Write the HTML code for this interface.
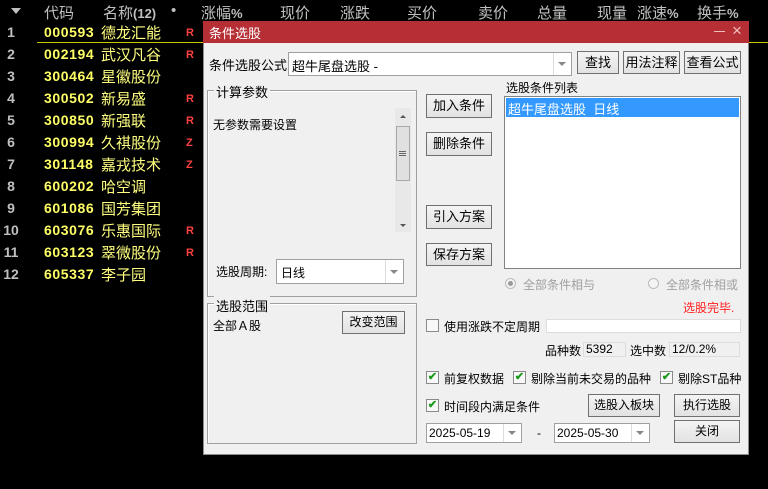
<!DOCTYPE html>
<html><head><meta charset="utf-8"><style>
*{margin:0;padding:0;box-sizing:border-box}
body{width:768px;height:489px;background:#000;position:relative;overflow:hidden;font-family:"Liberation Sans","Noto Sans CJK SC",sans-serif}
.a{position:absolute;white-space:nowrap}
.h{color:#c0c0c0;font-size:15px;top:2px}
.n{color:#c0c0c0;font-size:14px;font-weight:bold;left:0;width:22px;text-align:center}
.c{color:#ffff66;font-size:14px;font-weight:bold;left:44px;letter-spacing:0.6px}
.nm{color:#ffff80;font-size:15px;left:101px}
.r{color:#ff4040;font-size:11px;font-weight:bold;left:186px}
.d{font-size:12px;color:#000}
.btn{position:absolute;border:1px solid #707070;background:linear-gradient(#f4f4f4,#e2e2e2);font-size:12px;text-align:center;color:#000}
.box{position:absolute;background:#fff;border:1px solid #a0a0a0}
.grp{position:absolute;border:1px solid #a0a0a0;box-shadow:inset 1px 1px 0 #fff}
.gt{position:absolute;background:#f0f0f0;font-size:12px;padding:0 2px}
.cb{position:absolute;width:13px;height:13px;border:1px solid #8a8a8a;background:#f8f8f8;font-size:11px;line-height:11px;color:#1a9a1a;text-align:center;font-weight:bold}
.arr{position:absolute;width:0;height:0;border-left:4px solid transparent;border-right:4px solid transparent;border-top:4px solid #888}
</style></head><body>
<div class="a" style="left:11px;top:8px;width:0;height:0;border-left:5px solid transparent;border-right:5px solid transparent;border-top:6px solid #c0c0c0"></div>
<div class="a h" style="left:44px">代码</div>
<div class="a h" style="left:103px">名称<b style="font-size:13px">(12)</b></div>
<div class="a h" style="left:171px">•</div>
<div class="a h" style="left:201px">涨幅<b style="font-size:13px">%</b></div>
<div class="a h" style="left:280px">现价</div>
<div class="a h" style="left:340px">涨跌</div>
<div class="a h" style="left:407px">买价</div>
<div class="a h" style="left:478px">卖价</div>
<div class="a h" style="left:537px">总量</div>
<div class="a h" style="left:597px">现量</div>
<div class="a h" style="left:637px">涨速<b style="font-size:13px">%</b></div>
<div class="a h" style="left:697px">换手<b style="font-size:13px">%</b></div>
<div class="a" style="left:37px;top:42px;width:731px;height:1px;background:#c8c800"></div>

<div class="a n" style="top:24px">1</div><div class="a c" style="top:24px">000593</div><div class="a nm" style="top:22px">德龙汇能</div><div class="a r" style="top:27px">R</div>
<div class="a n" style="top:46px">2</div><div class="a c" style="top:46px">002194</div><div class="a nm" style="top:44px">武汉凡谷</div><div class="a r" style="top:49px">R</div>
<div class="a n" style="top:68px">3</div><div class="a c" style="top:68px">300464</div><div class="a nm" style="top:66px">星徽股份</div>
<div class="a n" style="top:90px">4</div><div class="a c" style="top:90px">300502</div><div class="a nm" style="top:88px">新易盛</div><div class="a r" style="top:93px">R</div>
<div class="a n" style="top:112px">5</div><div class="a c" style="top:112px">300850</div><div class="a nm" style="top:110px">新强联</div><div class="a r" style="top:115px">R</div>
<div class="a n" style="top:134px">6</div><div class="a c" style="top:134px">300994</div><div class="a nm" style="top:132px">久祺股份</div><div class="a r" style="top:137px">Z</div>
<div class="a n" style="top:156px">7</div><div class="a c" style="top:156px">301148</div><div class="a nm" style="top:154px">嘉戎技术</div><div class="a r" style="top:159px">Z</div>
<div class="a n" style="top:178px">8</div><div class="a c" style="top:178px">600202</div><div class="a nm" style="top:176px">哈空调</div>
<div class="a n" style="top:200px">9</div><div class="a c" style="top:200px">601086</div><div class="a nm" style="top:198px">国芳集团</div>
<div class="a n" style="top:222px">10</div><div class="a c" style="top:222px">603076</div><div class="a nm" style="top:220px">乐惠国际</div><div class="a r" style="top:225px">R</div>
<div class="a n" style="top:244px">11</div><div class="a c" style="top:244px">603123</div><div class="a nm" style="top:242px">翠微股份</div><div class="a r" style="top:247px">R</div>
<div class="a n" style="top:266px">12</div><div class="a c" style="top:266px">605337</div><div class="a nm" style="top:264px">李子园</div>

<!-- dialog -->
<div class="a" style="left:203px;top:21px;width:546px;height:434px;background:#f0f0f0;border:1px solid #8c8c8c"></div>
<div class="a" style="left:203px;top:21px;width:546px;height:22px;background:#b52f35"></div>
<div class="a" style="left:209px;top:23px;color:#fff;font-size:13px">条件选股</div>
<div class="a" style="left:714px;top:31px;width:11px;height:1px;background:#f0c0c0"></div>
<div class="a" style="left:732px;top:21px;color:#f0c0c0;font-size:17px">×</div>

<div class="a d" style="left:209px;top:55px;font-size:13px">条件选股公式</div>
<div class="box" style="left:288px;top:52px;width:284px;height:24px"></div>
<div class="a d" style="left:292px;top:56px;font-size:13px">超牛尾盘选股 -</div>
<div class="a" style="left:553px;top:53px;width:1px;height:22px;background:#ddd"></div>
<div class="arr" style="left:558px;top:62px"></div>
<div class="btn" style="left:577px;top:51px;width:42px;height:23px;line-height:21px;font-size:13px">查找</div>
<div class="btn" style="left:623px;top:51px;width:57px;height:23px;line-height:21px;font-size:13px">用法注释</div>
<div class="btn" style="left:684px;top:51px;width:57px;height:23px;line-height:21px;font-size:13px">查看公式</div>

<div class="grp" style="left:207px;top:90px;width:210px;height:207px"></div>
<div class="gt" style="left:214px;top:82px;font-size:13px">计算参数</div>
<div class="a d" style="left:213px;top:116px">无参数需要设置</div>
<div class="a" style="left:395px;top:108px;width:16px;height:124px;background:#e8e8e8"></div>
<div class="a" style="left:396px;top:126px;width:14px;height:55px;background:#e0e0e0;border:1px solid #a8a8a8"></div>
<div class="a" style="left:399px;top:151px;width:7px;height:1px;background:#666;box-shadow:0 2px 0 #666,0 4px 0 #666"></div>
<div class="a" style="left:400px;top:115px;width:0;height:0;border-left:3px solid transparent;border-right:3px solid transparent;border-bottom:3px solid #555"></div>
<div class="a" style="left:400px;top:224px;width:0;height:0;border-left:3px solid transparent;border-right:3px solid transparent;border-top:3px solid #555"></div>
<div class="a d" style="left:216px;top:263px">选股周期:</div>
<div class="box" style="left:276px;top:259px;width:128px;height:25px"></div>
<div class="a d" style="left:281px;top:264px">日线</div>
<div class="a" style="left:385px;top:260px;width:1px;height:23px;background:#ddd"></div>
<div class="arr" style="left:390px;top:270px"></div>

<div class="grp" style="left:207px;top:303px;width:210px;height:141px"></div>
<div class="gt" style="left:214px;top:296px;font-size:13px">选股范围</div>
<div class="a d" style="left:213px;top:317px">全部Ａ股</div>
<div class="btn" style="left:342px;top:311px;width:63px;height:23px;line-height:21px">改变范围</div>

<div class="btn" style="left:426px;top:94px;width:66px;height:24px;line-height:22px;font-size:13px">加入条件</div>
<div class="btn" style="left:426px;top:132px;width:66px;height:24px;line-height:22px;font-size:13px">删除条件</div>
<div class="btn" style="left:426px;top:205px;width:66px;height:24px;line-height:22px;font-size:13px">引入方案</div>
<div class="btn" style="left:426px;top:243px;width:66px;height:23px;line-height:22px;font-size:13px">保存方案</div>

<div class="a d" style="left:506px;top:79px">选股条件列表</div>
<div class="box" style="left:504px;top:96px;width:237px;height:173px;border-color:#828282"></div>
<div class="a" style="left:506px;top:98px;width:233px;height:19px;background:#3399ff"></div>
<div class="a" style="left:508px;top:99px;color:#fff;font-size:13px">超牛尾盘选股&nbsp;&nbsp;日线</div>

<div class="a" style="left:505px;top:278px;width:11px;height:11px;border-radius:50%;border:1px solid #bbb;background:#f4f4f4"></div>
<div class="a" style="left:508px;top:281px;width:5px;height:5px;border-radius:50%;background:#999"></div>
<div class="a" style="left:523px;top:276px;font-size:12px;color:#a0a0a0">全部条件相与</div>
<div class="a" style="left:648px;top:278px;width:11px;height:11px;border-radius:50%;border:1px solid #bbb;background:#f4f4f4"></div>
<div class="a" style="left:666px;top:276px;font-size:12px;color:#a0a0a0">全部条件相或</div>
<div class="a" style="left:683px;top:299px;font-size:12px;color:#ff2020">选股完毕.</div>

<div class="cb" style="left:426px;top:319px"></div>
<div class="a d" style="left:444px;top:318px">使用涨跌不定周期</div>
<div class="box" style="left:546px;top:319px;width:195px;height:14px;border-color:#ddd"></div>
<div class="a d" style="left:545px;top:342px">品种数</div>
<div class="a" style="left:583px;top:342px;width:43px;height:15px;border:1px solid #ddd;font-size:12px;line-height:13px;padding-left:2px">5392</div>
<div class="a d" style="left:630px;top:342px">选中数</div>
<div class="a" style="left:669px;top:342px;width:71px;height:15px;border:1px solid #ddd;font-size:12px;line-height:13px;padding-left:2px">12/0.2%</div>

<div class="cb" style="left:426px;top:371px">✔</div><div class="a d" style="left:444px;top:370px">前复权数据</div>
<div class="cb" style="left:513px;top:371px">✔</div><div class="a d" style="left:531px;top:370px">剔除当前未交易的品种</div>
<div class="cb" style="left:660px;top:371px">✔</div><div class="a d" style="left:678px;top:370px">剔除ST品种</div>
<div class="cb" style="left:426px;top:399px">✔</div><div class="a d" style="left:444px;top:398px">时间段内满足条件</div>
<div class="btn" style="left:588px;top:394px;width:72px;height:23px;line-height:21px">选股入板块</div>
<div class="btn" style="left:674px;top:394px;width:66px;height:23px;line-height:21px">执行选股</div>
<div class="btn" style="left:674px;top:420px;width:66px;height:23px;line-height:21px">关闭</div>

<div class="box" style="left:426px;top:423px;width:96px;height:20px"></div>
<div class="a d" style="left:429px;top:426px">2025-05-19</div>
<div class="a" style="left:503px;top:424px;width:1px;height:18px;background:#ddd"></div>
<div class="arr" style="left:508px;top:431px"></div>
<div class="a d" style="left:537px;top:426px">-</div>
<div class="box" style="left:554px;top:423px;width:96px;height:20px"></div>
<div class="a d" style="left:557px;top:426px">2025-05-30</div>
<div class="a" style="left:631px;top:424px;width:1px;height:18px;background:#ddd"></div>
<div class="arr" style="left:636px;top:431px"></div>
</body></html>
